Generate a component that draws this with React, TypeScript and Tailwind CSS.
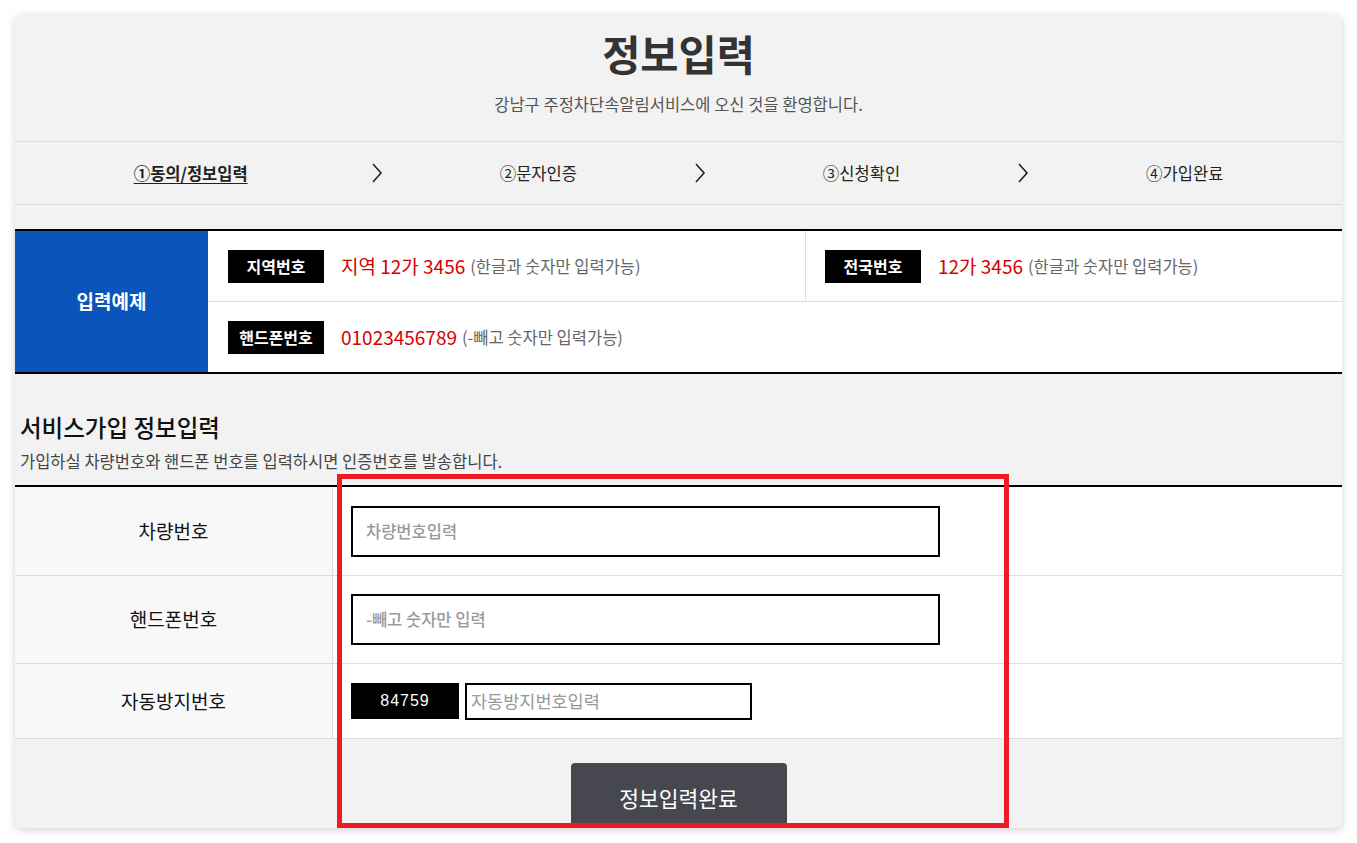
import React from 'react';

const FONT = { fontFamily: '"Noto Sans CJK KR", "Noto Sans", sans-serif' };

const steps = ['①동의/정보입력', '②문자인증', '③신청확인', '④가입완료'];

const Chevron = () => (
  <svg width="12" height="20" viewBox="0 0 12 20" className="shrink-0">
    <polyline points="2,1 10,10 2,19" fill="none" stroke="#222" strokeWidth="1.6" />
  </svg>
);

const Badge = ({ label }: { label: string }) => (
  <span className="inline-flex items-center justify-center w-[96px] h-[33px] bg-black text-white text-[16px] font-bold shrink-0">
    {label}
  </span>
);

const Example = ({ badge, red, note }: { badge: string; red: string; note: string }) => (
  <div className="flex items-center">
    <Badge label={badge} />
    <span className="ml-[17px] text-[19px] text-[#d40000]">{red}</span>
    <span className="ml-[5px] text-[16.5px] text-[#666]">{note}</span>
  </div>
);

const FormRow = ({ label, height, children }: { label: string; height: string; children: React.ReactNode }) => (
  <div className={`flex border-b border-[#dddddd] ${height}`}>
    <div className="w-[318px] shrink-0 bg-[#f8f8f8] border-r border-[#dddddd] flex items-center justify-center text-[19px] text-[#111]">
      {label}
    </div>
    <div className="flex-1 bg-white flex items-center pl-[18px]">{children}</div>
  </div>
);

export default function App() {
  return (
    <div className="relative min-h-[843px] bg-white" style={FONT}>
      <div className="px-[15px] pt-[15px]">
        <div className="h-[813px] overflow-hidden rounded-[6px] bg-[#f2f2f2] shadow-[0_2px_8px_rgba(0,0,0,0.18)]">
          {/* Header */}
          <div className="pt-[12px] pb-[26px] text-center">
            <h1 className="text-[41.5px] leading-[52px] font-bold text-[#333]">정보입력</h1>
            <p className="mt-[14px] text-[16.5px] leading-[22px] text-[#555]">
              강남구 주정차단속알림서비스에 오신 것을 환영합니다.
            </p>
          </div>

          {/* Steps */}
          <div className="h-[64px] border-y border-[#dddddd] flex items-center justify-center gap-[117px] text-[16.5px] text-[#222]">
            {steps.map((s, i) => (
              <React.Fragment key={s}>
                {i > 0 && <Chevron />}
                <span className={i === 0 ? 'font-bold underline underline-offset-[3px] mr-[6px]' : ''}>{s}</span>
              </React.Fragment>
            ))}
          </div>

          {/* Input example */}
          <div className="mt-[24px] flex border-y-2 border-black">
            <div className="w-[193px] shrink-0 bg-[#0a54bc] flex items-center justify-center text-white text-[19px] font-bold">
              입력예제
            </div>
            <div className="flex-1 bg-white">
              <div className="flex h-[71px] border-b border-[#dddddd]">
                <div className="w-[598px] border-r border-[#dddddd] flex items-center pl-[20px]">
                  <Example badge="지역번호" red="지역 12가 3456" note="(한글과 숫자만 입력가능)" />
                </div>
                <div className="flex-1 flex items-center pl-[19px]">
                  <Example badge="전국번호" red="12가 3456" note="(한글과 숫자만 입력가능)" />
                </div>
              </div>
              <div className="h-[70px] flex items-center pl-[20px]">
                <Example badge="핸드폰번호" red="01023456789" note="(-빼고 숫자만 입력가능)" />
              </div>
            </div>
          </div>

          {/* Service form */}
          <div className="mt-[38px] pl-[5px]">
            <h2 className="text-[23.5px] leading-[30px] font-medium text-[#111]">서비스가입 정보입력</h2>
            <p className="mt-[8px] text-[16.5px] leading-[22px] text-[#444]">
              가입하실 차량번호와 핸드폰 번호를 입력하시면 인증번호를 발송합니다.
            </p>
          </div>

          <div className="mt-[13px] border-t-2 border-black">
            <FormRow label="차량번호" height="h-[89px]">
              <div className="w-[589px] h-[51px] border-2 border-black bg-white flex items-center pl-[13px] text-[16.5px] font-medium text-[#9a9a9a]">
                차량번호입력
              </div>
            </FormRow>
            <FormRow label="핸드폰번호" height="h-[88px]">
              <div className="w-[589px] h-[51px] border-2 border-black bg-white flex items-center pl-[13px] text-[16.5px] font-medium text-[#9a9a9a]">
                -빼고 숫자만 입력
              </div>
            </FormRow>
            <FormRow label="자동방지번호" height="h-[75px]">
              <div className="flex items-center gap-[6px]">
                <div
                  className="w-[108px] h-[36px] bg-black text-white flex items-center justify-center text-[16px] tracking-[1px]"
                  style={{ fontFamily: '"Liberation Sans", Arial, sans-serif' }}
                >
                  84759
                </div>
                <div className="w-[287px] h-[37px] border-2 border-black bg-white flex items-center pl-[4px] text-[17.5px] text-[#999]">
                  자동방지번호입력
                </div>
              </div>
            </FormRow>
          </div>

          <div className="pt-[24px] flex justify-center">
            <button className="w-[216px] h-[70px] rounded-t-[4px] bg-[#47474f] text-white text-[21.5px]">
              정보입력완료
            </button>
          </div>
        </div>
      </div>

      {/* Highlight annotation */}
      <div className="absolute left-[337px] top-[474px] w-[672px] h-[354px] border-[5px] border-[#ed1c24] pointer-events-none" />
    </div>
  );
}
